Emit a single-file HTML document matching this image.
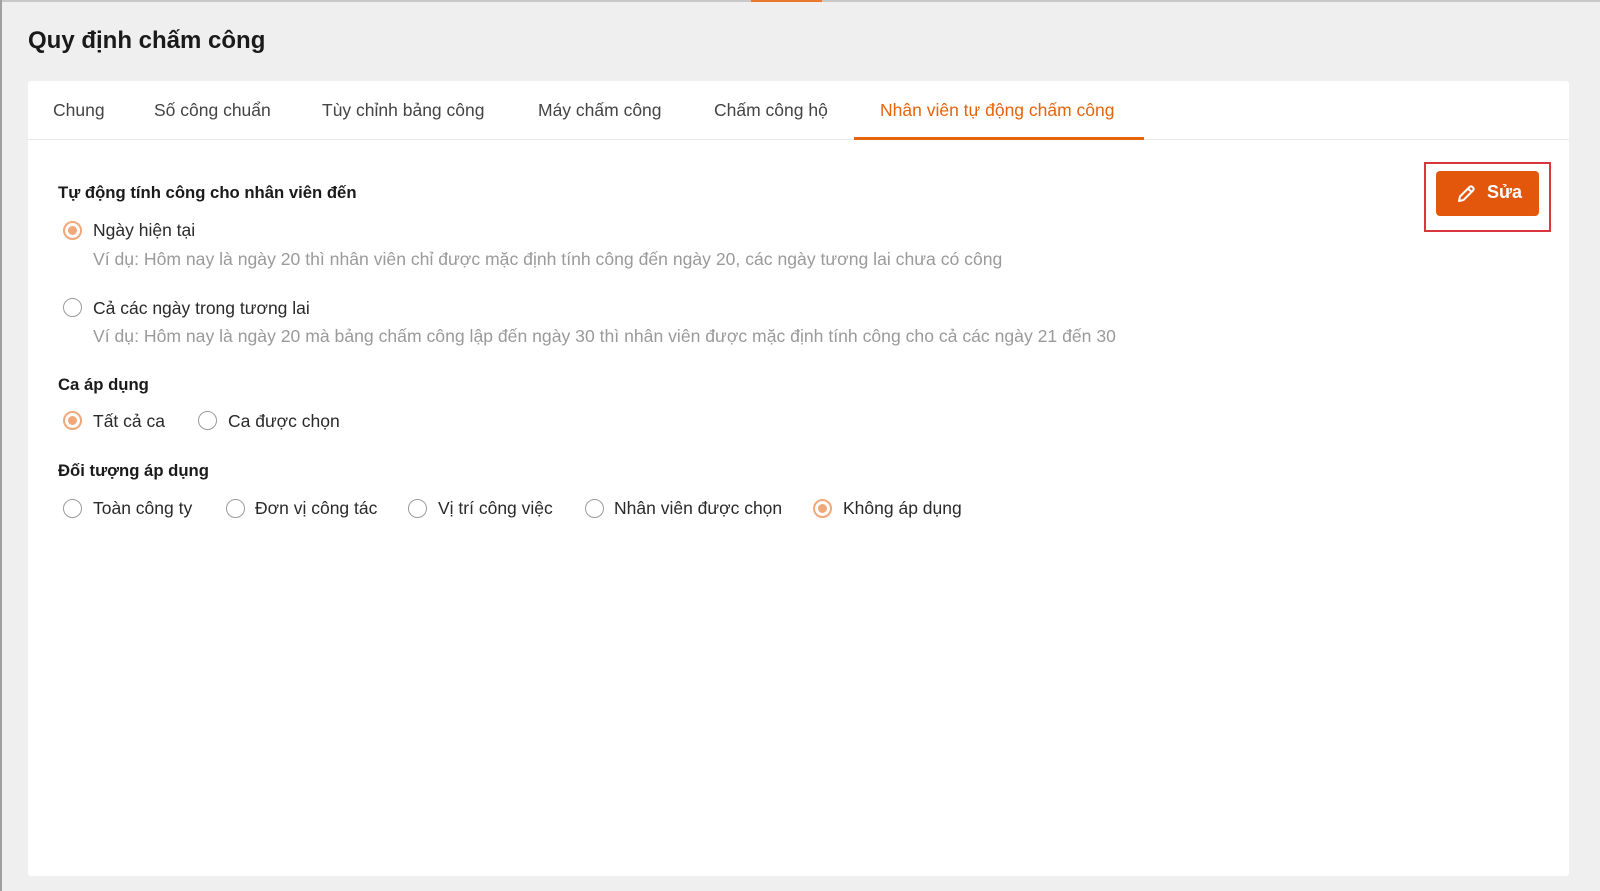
<!DOCTYPE html>
<html><head><meta charset="utf-8"><style>
*{margin:0;padding:0;box-sizing:border-box}
body{width:1600px;height:891px;background:#efefef;font-family:"Liberation Sans",Arial,sans-serif;position:relative;overflow:hidden;color:#222}
.a{position:absolute;white-space:nowrap}
.topl{left:0;top:0;width:1600px;height:2px;background:#c8c8c8}
.topo{left:751px;top:0;width:71px;height:2px;background:#e8792e}
.lb{left:0;top:0;width:2px;height:891px;background:#a0a0a0}
.title{left:28px;top:27px;font-size:24px;font-weight:bold;color:#1a1a1a}
.card{left:28px;top:81px;width:1541px;height:795px;background:#fff;border-radius:3px}
.tabline{left:28px;top:139px;width:1541px;height:1px;background:#e8e8e8}
.tab{top:100px;font-size:17.5px;color:#444}
.act{color:#e5640c}
.ul{left:854px;top:137px;width:290px;height:3px;background:#e5640c}
.h{font-size:16.7px;font-weight:bold;color:#1a1a1a}
.t{font-size:17.5px;color:#2a2a2a}
.g{font-size:17.6px;color:#9a9a9a}
.r{width:19px;height:19px;border-radius:50%;border:1.5px solid #9a9a9a;background:#fff}
.r.on{border:2px solid #f0a77a}
.r.on::after{content:"";position:absolute;left:3px;top:3px;width:9px;height:9px;border-radius:50%;background:#f0a77a}
.red{left:1424px;top:162px;width:127px;height:70px;border:2px solid #d9373d}
.btn{left:1436px;top:171px;width:103px;height:45px;background:#e2570b;border-radius:4px;color:#fff;font-size:18px;font-weight:bold}
</style></head><body>
<div class="a topl"></div><div class="a topo"></div><div class="a lb"></div>
<div class="a title">Quy định chấm công</div>
<div class="a card"></div>
<div class="a tabline"></div>
<div class="a tab" style="left:53px">Chung</div>
<div class="a tab" style="left:154px">Số công chuẩn</div>
<div class="a tab" style="left:322px">Tùy chỉnh bảng công</div>
<div class="a tab" style="left:538px">Máy chấm công</div>
<div class="a tab" style="left:714px">Chấm công hộ</div>
<div class="a tab act" style="left:880px">Nhân viên tự động chấm công</div>
<div class="a ul"></div>

<div class="a red"></div>
<div class="a btn"><svg style="position:absolute;left:20px;top:13px" width="20" height="20" viewBox="0 0 20 20" fill="none" stroke="#fff" stroke-width="2" stroke-linejoin="round"><path d="M3 17l1-4.5L13.5 3a2 2 0 0 1 3 0l.5.5a2 2 0 0 1 0 3L7.5 16z M12 4.5l3.5 3.5"/></svg><span style="position:absolute;left:51px;top:11px">Sửa</span></div>

<div class="a h" style="left:58px;top:183px">Tự động tính công cho nhân viên đến</div>
<div class="a r on" style="left:63px;top:221px"></div>
<div class="a t" style="left:93px;top:220px">Ngày hiện tại</div>
<div class="a g" style="left:93px;top:249px">Ví dụ: Hôm nay là ngày 20 thì nhân viên chỉ được mặc định tính công đến ngày 20, các ngày tương lai chưa có công</div>
<div class="a r" style="left:63px;top:298px"></div>
<div class="a t" style="left:93px;top:298px">Cả các ngày trong tương lai</div>
<div class="a g" style="left:93px;top:326px">Ví dụ: Hôm nay là ngày 20 mà bảng chấm công lập đến ngày 30 thì nhân viên được mặc định tính công cho cả các ngày 21 đến 30</div>

<div class="a h" style="left:58px;top:375px">Ca áp dụng</div>
<div class="a r on" style="left:63px;top:411px"></div>
<div class="a t" style="left:93px;top:411px">Tất cả ca</div>
<div class="a r" style="left:198px;top:411px"></div>
<div class="a t" style="left:228px;top:411px">Ca được chọn</div>

<div class="a h" style="left:58px;top:461px">Đối tượng áp dụng</div>
<div class="a r" style="left:63px;top:499px"></div>
<div class="a t" style="left:93px;top:498px">Toàn công ty</div>
<div class="a r" style="left:226px;top:499px"></div>
<div class="a t" style="left:255px;top:498px">Đơn vị công tác</div>
<div class="a r" style="left:408px;top:499px"></div>
<div class="a t" style="left:438px;top:498px">Vị trí công việc</div>
<div class="a r" style="left:585px;top:499px"></div>
<div class="a t" style="left:614px;top:498px">Nhân viên được chọn</div>
<div class="a r on" style="left:813px;top:499px"></div>
<div class="a t" style="left:843px;top:498px">Không áp dụng</div>
</body></html>
